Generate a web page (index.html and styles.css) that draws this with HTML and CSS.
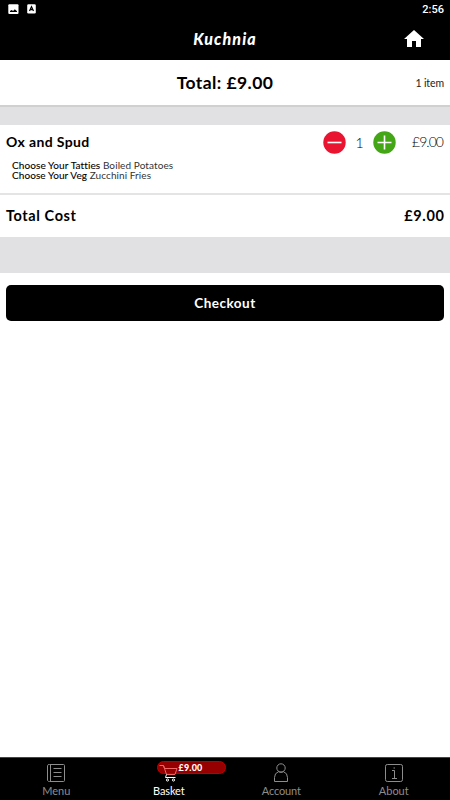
FILE: index.html
```html
<!DOCTYPE html>
<html lang="en">
<head>
<meta charset="utf-8">
<title>Kuchnia</title>
<link rel="stylesheet" href="styles.css">
</head>
<body>
<div class="app">
  <div class="status">
    <svg width="11" height="11" viewBox="0 0 11 11"><rect x=".3" y=".3" width="10.2" height="9.7" rx="1" fill="#fff"/><path d="M2 8V7l1.6-1 1.5 1 1.7-1.8L9 7.3V8z" fill="#000"/></svg>
    <svg class="status-a" width="9" height="10" viewBox="0 0 9 10"><rect x=".2" y=".2" width="8.6" height="9.3" rx="1.3" fill="#fff"/><path d="M2.5 7L4.5 2.7 6.5 7M3.1 5.6h2.8" fill="none" stroke="#000" stroke-width="1.2"/></svg>
    <span class="clock">2:56</span>
  </div>
  <header class="header">
    <h1 class="brand">Kuchnia</h1>
    <svg class="home" width="20" height="17" viewBox="0 0 20 17"><path d="M10 0L0 9h3v8h5v-6h4v6h5V9h3z" fill="#fff"/></svg>
  </header>
  <section class="summary">
    <strong class="summary-total">Total: £9.00</strong>
    <span class="count">1 item</span>
  </section>
  <div class="gap-small"></div>
  <section class="item">
    <div class="item-row">
      <strong class="item-name">Ox and Spud</strong>
      <div class="stepper">
        <svg width="23" height="23" viewBox="0 0 23 23"><circle cx="11.5" cy="11.5" r="11.2" fill="#e91530"/><path d="M4.5 11.5h14" stroke="#fff" stroke-width="1.6"/></svg>
        <span class="qty">1</span>
        <svg width="23" height="23" viewBox="0 0 23 23"><circle cx="11.5" cy="11.5" r="11.2" fill="#44a616"/><path d="M4.5 11.5h14M11.5 4.5v14" stroke="#fff" stroke-width="1.6"/></svg>
      </div>
      <span class="price">£9.00</span>
    </div>
    <div class="options">
      <div class="option one"><b>Choose Your Tatties</b> Boiled Potatoes</div>
      <div class="option two"><b>Choose Your Veg</b> Zucchini Fries</div>
    </div>
  </section>
  <section class="total"><strong class="total-label">Total Cost</strong><strong class="total-price">£9.00</strong></section>
  <div class="gap-large"></div>
  <main class="actions"><button class="checkout">Checkout</button></main>
  <nav class="tabs">
    <div class="tab menu">
      <svg width="20" height="20" viewBox="0 0 20 20"><path d="M3.5 1.5h14q1 0 1 1v15q0 1-1 1h-14q-1.5 0-2-1V2.5q0-1 2-1zM4.5 1.5v17M7.5 5.5h8M7.5 9.5h8M7.5 13.5h8"/></svg>
      <span>Menu</span>
    </div>
    <div class="tab basket">
      <div class="badge">£9.00</div>
      <svg class="cart" width="20" height="20" viewBox="0 0 20 20"><g class="cart-top"><path d="M.5 2.5h4l1 3h12.5l-2 6H7.5L4.5 2.5"/></g><path d="M7.5 11.5l-1 3h10"/><circle cx="8.5" cy="17" r="1.1"/><circle cx="14.5" cy="17" r="1.1"/></svg>
      <span>Basket</span>
    </div>
    <div class="tab account">
      <svg width="20" height="20" viewBox="0 0 20 20"><circle cx="10" cy="5" r="4.2"/><path d="M3.5 18.5v-4q0-4.5 4-5.8 2.5 1 5 0 4 1.3 4 5.8v4z"/></svg>
      <span>Account</span>
    </div>
    <div class="tab about">
      <svg width="20" height="20" viewBox="0 0 20 20"><rect x="1.5" y="1.5" width="17" height="17" rx="1.8"/><path d="M8 7.5h2.5v7.5M8 15.5h5M9.5 5h1.5"/></svg>
      <span>About</span>
    </div>
  </nav>
</div>
</body>
</html>
```
FILE: styles.css
```css
* { box-sizing: border-box; }
body { margin: 0; background: #fff; color: #000; font-family: Lato, "Liberation Sans", sans-serif; }
svg { display: block; flex: none; }
.app { width: 450px; height: 800px; display: flex; flex-direction: column; }
.status { height: 20px; flex: none; background: #000; color: #fff; display: flex; align-items: flex-start; padding: 4px 6px 0 8px; }
.status-a { margin-left: 8px; }
.clock { margin-left: auto; font: 500 11px/11px Roboto, sans-serif; }
.header { height: 40px; flex: none; background: #000; color: #fff; display: grid; grid-template-columns: 1fr auto 1fr; align-items: start; padding: 10px 26px 0; }
.brand { grid-column: 2; margin: 0; font: italic 900 16px/18px Lato, sans-serif; letter-spacing: 1.1px; }
.home { justify-self: end; }
.summary { height: 47px; flex: none; border-bottom: 2px solid #d0d0d0; display: grid; grid-template-columns: 1fr auto 1fr; align-items: center; padding: 0 6px; }
.summary-total { grid-column: 2; font-size: 17.5px; font-weight: 700; letter-spacing: .42px; }
.count { justify-self: end; font-size: 10.5px; letter-spacing: -.1px; color: #222; }
.gap-small { height: 18px; flex: none; background: #e1e1e3; }
.item { height: 70px; flex: none; border-bottom: 2px solid #e4e4e4; padding: 5px 6px 0; }
.item-row { display: flex; align-items: center; height: 24px; }
.item-name, .total-label, .total-price { font-size: 14px; font-weight: 700; letter-spacing: .38px; }
.item-name { padding-bottom: 2px; }
.total-label { font-size: 14.5px; letter-spacing: .6px; }
.total-price { font-size: 14.5px; letter-spacing: .65px; margin-right: -.6px; }
.stepper { margin-left: auto; display: flex; align-items: center; }
.qty { width: 27px; text-align: center; font-size: 14px; font-weight: 300; }
.price { width: 48px; text-align: right; font-size: 14px; font-weight: 300; letter-spacing: -.95px; padding-right: 1px; padding-bottom: 1px; }
.options { padding: 6px 6px 0; font-size: 10px; line-height: 10px; }
.option { width: max-content; color: #333; }
.one { letter-spacing: .1px; }
.two { letter-spacing: .08px; }
.option b { font-weight: 400; color: #000; -webkit-text-stroke: .1px #000; }
.total { height: 42px; flex: none; display: flex; align-items: center; justify-content: space-between; padding: 0 6px 2px; }
.gap-large { height: 36px; flex: none; background: #e1e1e3; }
.actions { flex: 1; padding: 12px 6px; }
.checkout { width: 100%; height: 36px; display: block; border: 0; border-radius: 5px; background: #000; color: #fff; font: 700 13.5px Lato, sans-serif; letter-spacing: .5px; padding: 0; }
.tabs { height: 43px; flex: none; background: #000; border-top: 1px solid #454545; display: grid; grid-template-columns: repeat(4, 1fr); }
.tab { position: relative; display: flex; flex-direction: column; align-items: center; padding-top: 5px; color: #8d8d8d; font-size: 11px; line-height: 14px; }
.tab svg { fill: none; stroke: currentColor; stroke-width: 1; }
.tab span { margin-top: 1px; }
.basket { color: #fff; }
.account { letter-spacing: -.15px; }
.tab.basket span { letter-spacing: -.15px; }
.badge { position: absolute; left: 44px; top: 3px; width: 69px; height: 13px; border: 1px solid #b00; border-radius: 7px; background: #960000; font-size: 9px; font-weight: 900; line-height: 11px; letter-spacing: .2px; padding-left: 21px; }
.cart { position: relative; }
.cart-top { stroke: #e66; }
```
